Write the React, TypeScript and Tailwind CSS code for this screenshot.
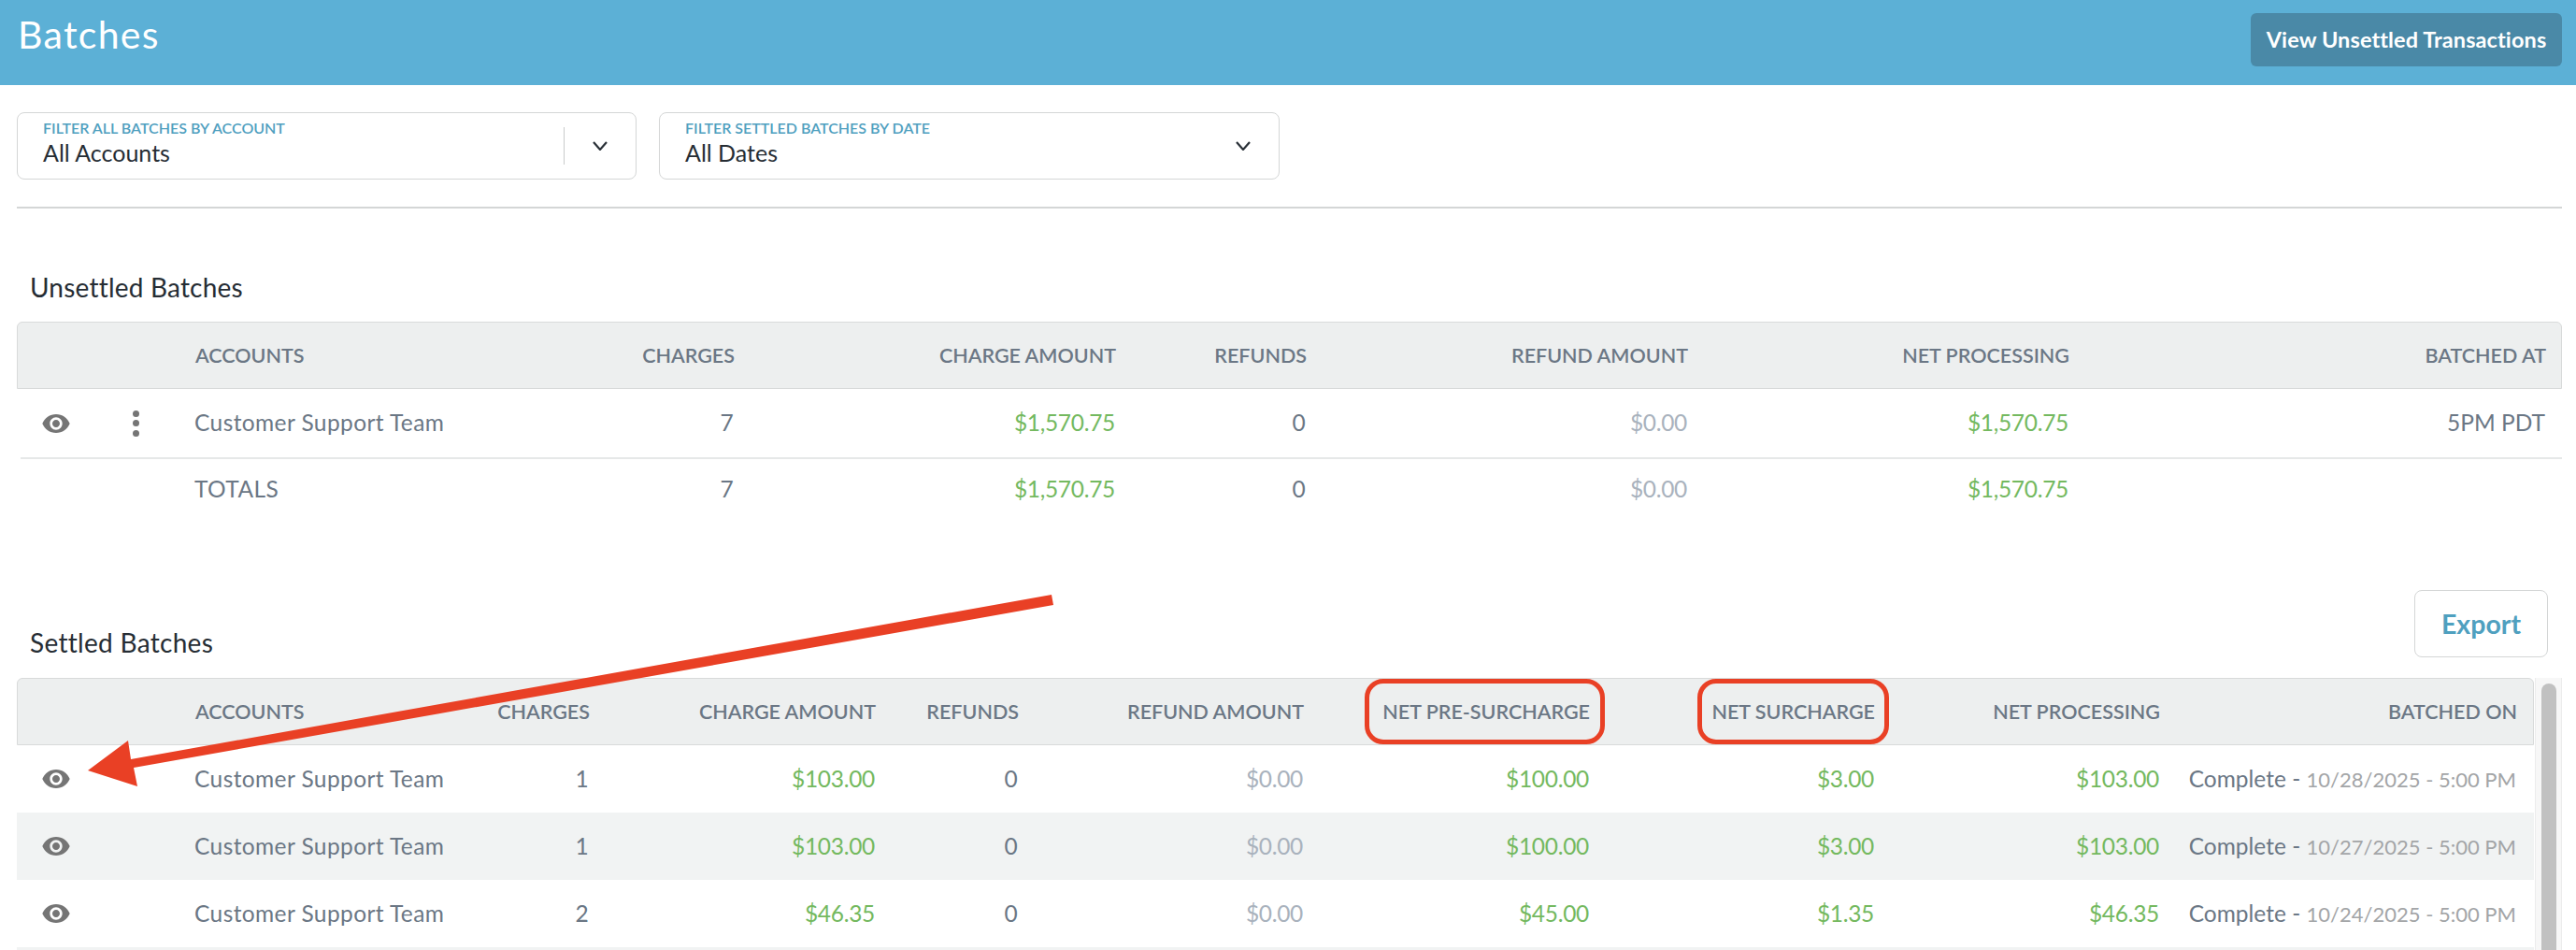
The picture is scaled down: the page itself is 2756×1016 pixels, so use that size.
const font = "[font-family:'Lato','Liberation_Sans',sans-serif]";

function Eye() {
  return (
    <svg viewBox="0 0 24 24" className="h-8 w-8 fill-[#757575]">
      <path d="M12 4.5C7 4.5 2.73 7.61 1 12c1.73 4.39 6 7.5 11 7.5s9.27-3.11 11-7.5c-1.73-4.39-6-7.5-11-7.5zM12 17c-2.76 0-5-2.24-5-5s2.24-5 5-5 5 2.24 5 5-2.24 5-5 5zm0-8c-1.66 0-3 1.34-3 3s1.34 3 3 3 3-1.34 3-3-1.34-3-3-3z" />
    </svg>
  );
}

function Chevron() {
  return (
    <svg viewBox="0 0 16 10" className="h-[10px] w-4 fill-none stroke-[#2a3138] stroke-[2.2]">
      <path d="M1 1l7 8 7-8" />
    </svg>
  );
}

function Filter({ label, value, divider, width }: { label: string; value: string; divider?: boolean; width: string }) {
  return (
    <div className={`flex h-[72px] items-center rounded-lg border border-[#d4d6d6] pl-[27px] ${width}`}>
      <div className="-mt-[6px] min-w-0 flex-1">
        <div className="text-[16px] leading-[15px] font-semibold text-[#4fa0bf]">{label}</div>
        <div className="mt-[5px] text-[25px] leading-[28px] text-[#262d34]">{value}</div>
      </div>
      {divider && <div className="h-10 w-px bg-[#c9cbcb]" />}
      <div className="flex w-[76px] justify-center">
        <Chevron />
      </div>
    </div>
  );
}

const unsettledCols = "grid grid-cols-[190px_292px_285px_408px_204px_408px_408px_510px] pr-[18px]";
const settledCols = "grid grid-cols-[190px_192px_230px_306px_153px_305px_306px_305px_305px_382px] pr-[19px]";
const rowText = "text-[24.5px] tracking-[0.4px] text-[#6b7785]";
const money = "text-right tracking-[-0.3px] text-[#74b95f]";
const zero = "text-right tracking-[-0.3px] text-[#a9b2bd]";

function Head({ cols, labels }: { cols: string; labels: string[] }) {
  return (
    <div className={`${cols} h-[72px] items-center rounded-t-md border border-[#d8dada] bg-[#edefef] text-[21.5px] font-semibold text-[#6b7785]`}>
      <div />
      {labels.map((l, i) => (
        <div key={l} className={i === 0 ? "text-left" : "text-right"}>
          {l}
        </div>
      ))}
    </div>
  );
}

function SettledRow({ charges, amount, pre, sur, date, shaded }: {
  charges: string; amount: string; pre: string; sur: string; date: string; shaded?: boolean;
}) {
  return (
    <div className={`${settledCols} h-[72px] items-center ${rowText} ${shaded ? "bg-[#f1f3f3]" : "bg-white"}`}>
      <div className="flex pl-[26px]">
        <Eye />
      </div>
      <div className="whitespace-nowrap">Customer Support Team</div>
      <div className="text-right">{charges}</div>
      <div className={money}>{amount}</div>
      <div className="text-right">0</div>
      <div className={zero}>$0.00</div>
      <div className={money}>{pre}</div>
      <div className={money}>{sur}</div>
      <div className={money}>{amount}</div>
      <div className="whitespace-nowrap text-right tracking-normal">
        Complete - <span className="text-[22px] text-[#a3a5a7]">{date} - 5:00 PM</span>
      </div>
    </div>
  );
}

export default function App() {
  return (
    <div className={`relative h-screen overflow-hidden bg-white ${font}`}>
      <header className="flex h-[91px] items-start justify-between bg-[#5cb0d6] pr-[15px] pl-[19px]">
        <h1 className="mt-[14px] text-[41px] leading-[46px] font-normal tracking-[1.3px] text-white">Batches</h1>
        <button className="mt-[14px] h-[57px] w-[333px] rounded-md bg-[#4a89a7] text-[23.5px] font-bold tracking-[0.1px] text-white">
          View Unsettled Transactions
        </button>
      </header>

      <div className="pr-[15px] pl-[18px]">
        <div className="mt-[29px] flex gap-[24px]">
          <Filter label="FILTER ALL BATCHES BY ACCOUNT" value="All Accounts" divider width="w-[663px]" />
          <Filter label="FILTER SETTLED BATCHES BY DATE" value="All Dates" width="w-[664px]" />
        </div>
        <div className="mt-[29px] h-[2px] bg-[#d4d6d6]" />

        <h2 className="mt-[68px] pl-[14px] text-[28px] leading-[32px] font-normal tracking-[0.2px] text-[#262d34]">Unsettled Batches</h2>
        <div className="mt-[21px]">
          <Head
            cols={unsettledCols}
            labels={["ACCOUNTS", "CHARGES", "CHARGE AMOUNT", "REFUNDS", "REFUND AMOUNT", "NET PROCESSING", "BATCHED AT"]}
          />
          <div className="ml-1 h-[75px] border-b-2 border-[#e6e8e8]">
            <div className={`${unsettledCols} -ml-1 h-full items-center ${rowText}`}>
              <div className="flex items-center pl-[26px]">
                <Eye />
                <div className="ml-[66px] flex flex-col gap-[3.5px]">
                  <span className="h-[7px] w-[7px] rounded-full bg-[#757575]" />
                  <span className="h-[7px] w-[7px] rounded-full bg-[#757575]" />
                  <span className="h-[7px] w-[7px] rounded-full bg-[#757575]" />
                </div>
              </div>
              <div className="whitespace-nowrap">Customer Support Team</div>
              <div className="text-right">7</div>
              <div className={money}>$1,570.75</div>
              <div className="text-right">0</div>
              <div className={zero}>$0.00</div>
              <div className={money}>$1,570.75</div>
              <div className="text-right tracking-normal">5PM PDT</div>
            </div>
          </div>
          <div className={`${unsettledCols} h-[64px] items-center ${rowText}`}>
            <div />
            <div>TOTALS</div>
            <div className="text-right">7</div>
            <div className={money}>$1,570.75</div>
            <div className="text-right">0</div>
            <div className={zero}>$0.00</div>
            <div className={money}>$1,570.75</div>
            <div />
          </div>
        </div>

        <div className="mt-[76px] flex items-end justify-between">
          <h2 className="pl-[14px] text-[28px] leading-[32px] font-normal tracking-[0.3px] text-[#262d34]">Settled Batches</h2>
          <button className="mr-[15px] h-[72px] w-[143px] rounded-lg border border-[#d4d6d6] text-[28.5px] font-bold text-[#4fa0bf]">
            Export
          </button>
        </div>

        <div className="mt-[22px] flex">
          <div className="w-[2693px]">
            <Head
              cols={settledCols}
              labels={["ACCOUNTS", "CHARGES", "CHARGE AMOUNT", "REFUNDS", "REFUND AMOUNT", "NET PRE-SURCHARGE", "NET SURCHARGE", "NET PROCESSING", "BATCHED ON"]}
            />
            <SettledRow charges="1" amount="$103.00" pre="$100.00" sur="$3.00" date="10/28/2025" />
            <SettledRow charges="1" amount="$103.00" pre="$100.00" sur="$3.00" date="10/27/2025" shaded />
            <SettledRow charges="2" amount="$46.35" pre="$45.00" sur="$1.35" date="10/24/2025" />
            <div className="h-[72px] bg-[#f1f3f3]" />
          </div>
          <div className="ml-px w-[29px] border-x border-[#ececec] bg-[#f7f7f7] pt-[6px] pl-[6px]">
            <div className="h-[400px] w-4 rounded-full bg-[#c1c1c1]" />
          </div>
        </div>
      </div>

      {/* annotations drawn on top of the screenshot */}
      <div className="absolute top-[726px] left-[1460px] h-[70px] w-[257px] rounded-[20px] border-[5px] border-[#e94025]" />
      <div className="absolute top-[726px] left-[1816px] h-[70px] w-[205px] rounded-[20px] border-[5px] border-[#e94025]" />
      <svg className="absolute top-0 left-0 h-[1016px] w-[2756px] fill-[#e94025]" viewBox="0 0 2756 1016">
        <polygon points="94,824 137,792 140,812 1125,636 1127,647 143,821 147,841" />
      </svg>
    </div>
  );
}
